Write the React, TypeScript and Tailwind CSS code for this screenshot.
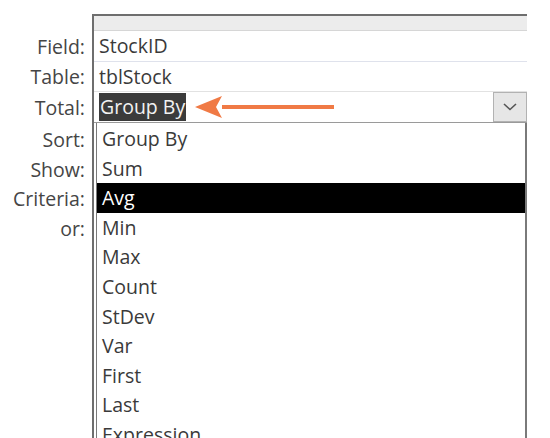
import React from "react";

const labels = ["Sort:", "Show:", "Criteria:", "or:"];
const options = ["Group By", "Sum", "Avg", "Min", "Max", "Count", "StDev", "Var", "First", "Last", "Expression"];

export default function App() {
  return (
    <div
      className="w-[550px] h-[438px] overflow-hidden bg-white flex items-start pt-[14px] text-[19.5px] text-[#3a3a3a]"
      style={{ fontFamily: '"Open Sans", "Noto Sans", sans-serif' }}
    >
      {/* Row labels */}
      <div className="w-[92px] shrink-0 pr-[7px] flex flex-col items-end text-[#454545]">
        <div className="h-[17px] shrink-0" />
        <div className="h-[31px] leading-[31px] shrink-0">Field:</div>
        <div className="h-[30px] leading-[30px] shrink-0">Table:</div>
        <div className="h-[31px] leading-[31px] shrink-0">Total:</div>
        <div className="h-[2px] shrink-0" />
        {labels.map((l) => (
          <div key={l} className="h-[29.6px] leading-[29.6px] shrink-0">{l}</div>
        ))}
      </div>

      {/* Design grid column */}
      <div className="w-[435px] shrink-0 border-t-2 border-l-2 border-[#6e6e6e] flex flex-col">
        <div className="h-[15px] shrink-0 bg-[#ececec] border-b border-[#d6d6d6]" />
        <div className="h-[31px] shrink-0 leading-[30px] pl-[5px] border-b border-[#dfe2ec]">StockID</div>
        <div className="h-[30px] shrink-0 leading-[29px] pl-[5px] border-b border-[#e2e2e2]">tblStock</div>

        {/* Total combobox */}
        <div className="h-[31px] shrink-0 flex items-center border-b border-[#9a9a9a]">
          <span className="ml-[5px] h-[28px] leading-[28px] px-[1px] bg-[#3b3b3b] text-[#f2f2f2]">Group By</span>
          <svg width="142" height="24" viewBox="0 0 142 24" className="ml-[8px]">
            <path d="M28 10 H140 V14 H28 Z" fill="#f07a45" />
            <path d="M1 12 L28 1 L22 12 L28 23 Z" fill="#f07a45" />
          </svg>
          <div className="ml-auto w-[34px] h-[30px] bg-[#e6e6e6] border border-[#b2b2b2] flex items-center justify-center">
            <svg width="14" height="8" viewBox="0 0 14 8">
              <path d="M1 1 L7 6.5 L13 1" fill="none" stroke="#555" strokeWidth="1.6" />
            </svg>
          </div>
        </div>

        {/* Dropdown list */}
        <div className="ml-[2px] h-[330px] shrink-0 border-l border-r-2 border-[#7a7a7a] pt-[1px]">
          {options.map((o) => (
            <div
              key={o}
              className={
                o === "Avg"
                  ? "h-[29.6px] leading-[29.6px] pl-[5px] bg-black text-white"
                  : "h-[29.6px] leading-[29.6px] pl-[5px]"
              }
            >
              {o}
            </div>
          ))}
        </div>
      </div>
    </div>
  );
}
